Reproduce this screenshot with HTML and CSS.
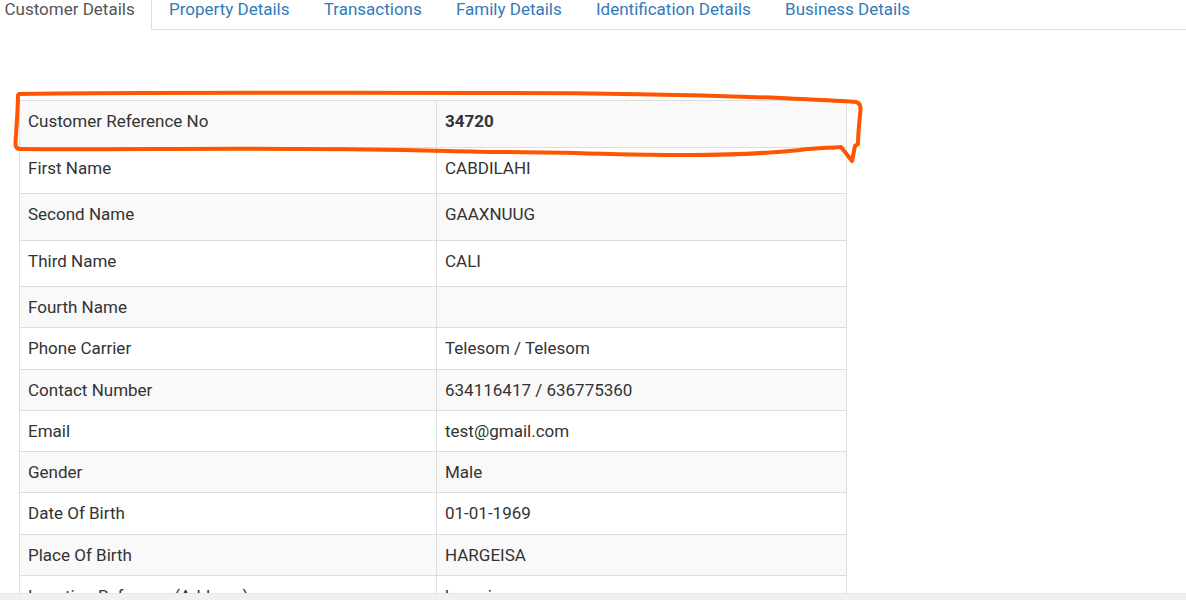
FILE: index.html
```html
<!DOCTYPE html>
<html lang="en">
<head>
    <meta charset="utf-8">
    <title>Customer Details</title>
    <link rel="stylesheet" href="styles.css">
</head>
<body>
    <ul class="tabs">
        <li class="tab active"><a>Customer Details</a></li>
        <li class="tab"><a>Property Details</a></li>
        <li class="tab"><a>Transactions</a></li>
        <li class="tab"><a>Family Details</a></li>
        <li class="tab"><a>Identification Details</a></li>
        <li class="tab"><a>Business Details</a></li>
    </ul>

    <div class="panel">
        <table class="details">
            <colgroup>
                <col class="col-label">
                <col class="col-value">
            </colgroup>
            <tr class="tall"><td>Customer Reference No</td><td><b>34720</b></td></tr>
            <tr class="tall"><td>First Name</td><td>CABDILAHI</td></tr>
            <tr class="tall"><td>Second Name</td><td>GAAXNUUG</td></tr>
            <tr class="tall"><td>Third Name</td><td>CALI</td></tr>
            <tr><td>Fourth Name</td><td></td></tr>
            <tr><td>Phone Carrier</td><td>Telesom / Telesom</td></tr>
            <tr><td>Contact Number</td><td>634116417 / 636775360</td></tr>
            <tr><td>Email</td><td>test@gmail.com</td></tr>
            <tr><td>Gender</td><td>Male</td></tr>
            <tr><td>Date Of Birth</td><td>01-01-1969</td></tr>
            <tr><td>Place Of Birth</td><td>HARGEISA</td></tr>
            <tr><td>Location Reference(Address)</td><td>hargeisa</td></tr>
        </table>
    </div>

    <!-- hand drawn marker round the reference row -->
    <svg class="scribble" width="1186" height="600" viewBox="0 0 1186 600">
        <path d="M19 94 C 120 92, 300 93, 500 93 C 620 93, 700 95, 780 98 C 820 100, 845 101, 856 102 C 861 103, 861 108, 860 115 C 859 125, 858 135, 858 144 L 855 146 L 852 161 L 841 147 C 830 148, 815 148, 800 150 C 770 153, 730 155, 690 155 C 620 155, 560 152, 500 152 C 440 151, 380 149, 300 149 C 200 148, 100 150, 20 149 C 15 149, 15 145, 16 135 C 17 120, 18 105, 18 95"
              fill="none" stroke="#ff5500" stroke-width="4" stroke-linecap="round" stroke-linejoin="round"/>
    </svg>

    <div class="hscroll"></div>
</body>
</html>
```

FILE: styles.css
```css
html, body {
    margin: 0;
    padding: 0;
    background: #fff;
}

body {
    font-family: Roboto, "Liberation Sans", sans-serif;
    font-size: 17px;
    color: #333;
    overflow: hidden;
    height: 600px;
}

.tabs {
    display: flex;
    list-style: none;
    margin: -12px 0 0 0;
    padding: 0;
    border-bottom: 1px solid #ddd;
}

.tab {
    margin-bottom: -1px;
}

.tab a {
    display: block;
    padding: 10px 16.1px;
    line-height: 20px;
    color: #337ab7;
    border: 1px solid transparent;
    cursor: pointer;
}

.tab.active {
    margin-left: -12.6px;
}

.tab.active a {
    color: #555;
    background: #fff;
    border-color: #ddd #ddd transparent #ddd;
}

.panel {
    padding: 70px 0 0 19px;
}

.details {
    border-collapse: collapse;
    table-layout: fixed;
    width: 828px;
    border: 1px solid #ddd;
}

.col-label {
    width: 417px;
}

.details td {
    border: 1px solid #ddd;
    padding: 10px 8px 10.25px 8px;
    line-height: 20px;
    vertical-align: top;
}

.details tr.tall td {
    padding-bottom: 15.5px;
}

.details tr:nth-child(odd) {
    background: #f9f9f9;
}

.scribble {
    position: absolute;
    top: 0;
    left: 0;
    pointer-events: none;
}

.hscroll {
    position: fixed;
    left: 0;
    right: 0;
    bottom: 0;
    height: 6px;
    background: #f1f1f1;
    border-top: 1px solid #e6e6e6;
}
```
